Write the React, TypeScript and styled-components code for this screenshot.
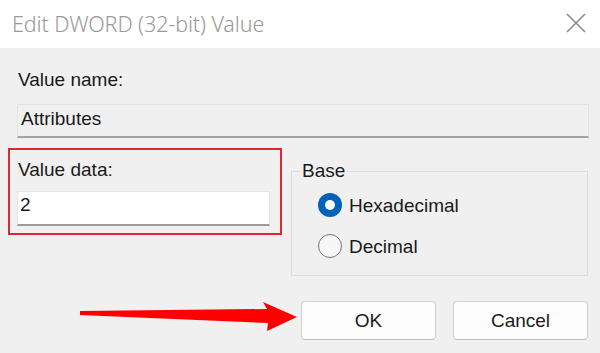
import styled, { createGlobalStyle } from "styled-components";

const GlobalStyle = createGlobalStyle`
html, body {
margin: 0;
padding: 0;
background: #f0f0f0;
}
* {
box-sizing: border-box;
}
`

const Dialog = styled.div`
position: relative;
width: 600px;
height: 353px;
overflow: hidden;
background: #f0f0f0;
font-family: "Liberation Sans", Arial, sans-serif;
color: #1a1a1a;
`

const TitleBar = styled.div`
height: 48px;
background: #ffffff;
display: flex;
align-items: center;
justify-content: space-between;
padding: 0 14px 0 12px;
`

const Title = styled.div`
font-family: "Noto Sans", "Open Sans", sans-serif;
font-size: 21.5px;
font-weight: 300;
color: #999999;
letter-spacing: -0.1px;
margin-top: -2px;
`

const CloseButton = styled.div`
width: 20px;
height: 20px;
display: flex;
margin-top: -3px;
`

const Body = styled.div`
padding: 0 11px 0 8px;
`

const FieldLabel = styled.div`
font-size: 19px;
line-height: 22px;
padding-left: 10px;
margin-top: 21px;
`

const NameBox = styled.div`
margin: 13px 0 0 9px;
height: 34px;
border: 1px solid #e4e4e4;
border-bottom: 2px solid #a3a3a3;
background: #f0f0f0;
padding: 2px 0 0 3px;
font-size: 19px;
line-height: 24px;
`

const Row = styled.div`
display: flex;
margin-top: 10px;
gap: 9px;
`

const Highlight = styled.div`
width: 274px;
height: 87px;
border: 2px solid #e3262d;
padding: 9px 0 0 8px;
`

const DataLabel = styled.div`
font-size: 19px;
line-height: 22px;
`

const DataInput = styled.div`
margin: 10px 0 0 -1px;
width: 253px;
height: 35px;
background: #ffffff;
border: 1px solid #e6e6e6;
border-bottom: 2px solid #9c9c9c;
padding: 1px 0 0 2px;
font-size: 19px;
line-height: 24px;
`

const Group = styled.fieldset`
margin: 12px 0 0 0;
width: 297px;
height: 116px;
border: 1px solid #dcdcdc;
padding: 10px 0 0 8px;
min-width: 0;
`

const Legend = styled.legend`
font-size: 19px;
line-height: 22px;
padding: 0 2px;
`

const RadioList = styled.div`
display: flex;
flex-direction: column;
gap: 13px;
padding-left: 18px;
`

const RadioRow = styled.div`
display: flex;
align-items: center;
gap: 7px;
height: 28px;
font-size: 19px;
line-height: 22px;
`

const RadioCircle = styled.span<{ $checked: boolean }>`
flex: none;
width: 24px;
height: 24px;
border-radius: 50%;
display: flex;
align-items: center;
justify-content: center;
background: ${(p) => (p.$checked ? "#0062b8" : "#f7f7f7")};
border: ${(p) => (p.$checked ? "none" : "1.5px solid #737373")};
margin-top: -2px;

&::after {
content: "";
display: ${(p) => (p.$checked ? "block" : "none")};
width: 10px;
height: 10px;
border-radius: 50%;
background: #ffffff;
}
`

const ButtonRow = styled.div`
display: flex;
justify-content: flex-end;
gap: 17px;
margin-top: 25px;
padding-right: 1px;
`

const Button = styled.div`
width: 135px;
height: 39px;
background: #fdfdfd;
border: 1px solid #d0d0d0;
border-bottom-color: #bcbcbc;
border-radius: 4px;
display: flex;
align-items: center;
justify-content: center;
font-size: 19px;
color: #1b1b1b;
`

const Arrow = styled.svg`
position: absolute;
left: 78px;
top: 300px;
`

function Radio({ label, checked }: { label: string; checked: boolean }) {
    return (
        <RadioRow>
            <RadioCircle $checked={checked} />
            {label}
        </RadioRow>
    )
}

export default function App() {
    return (
        <>
        <GlobalStyle />
        <Dialog>
            <TitleBar>
                <Title>Edit DWORD (32-bit) Value</Title>
                <CloseButton>
                    <svg width="20" height="20" viewBox="0 0 20 20">
                        <path d="M1 1 L19 19 M19 1 L1 19" stroke="#858585" strokeWidth="1.5" fill="none" />
                    </svg>
                </CloseButton>
            </TitleBar>
            <Body>
                <FieldLabel>Value name:</FieldLabel>
                <NameBox>Attributes</NameBox>
                <Row>
                    <Highlight>
                        <DataLabel>Value data:</DataLabel>
                        <DataInput>2</DataInput>
                    </Highlight>
                    <Group>
                        <Legend>Base</Legend>
                        <RadioList>
                            <Radio label="Hexadecimal" checked={true} />
                            <Radio label="Decimal" checked={false} />
                        </RadioList>
                    </Group>
                </Row>
                <ButtonRow>
                    <Button>OK</Button>
                    <Button>Cancel</Button>
                </ButtonRow>
            </Body>
            <Arrow width="222" height="34" viewBox="0 0 222 34">
                <polygon points="2,11 189,9 185,2 219,17 189,31 190,23 2,15" fill="#ff0000" />
            </Arrow>
        </Dialog>
        </>
    )
}
